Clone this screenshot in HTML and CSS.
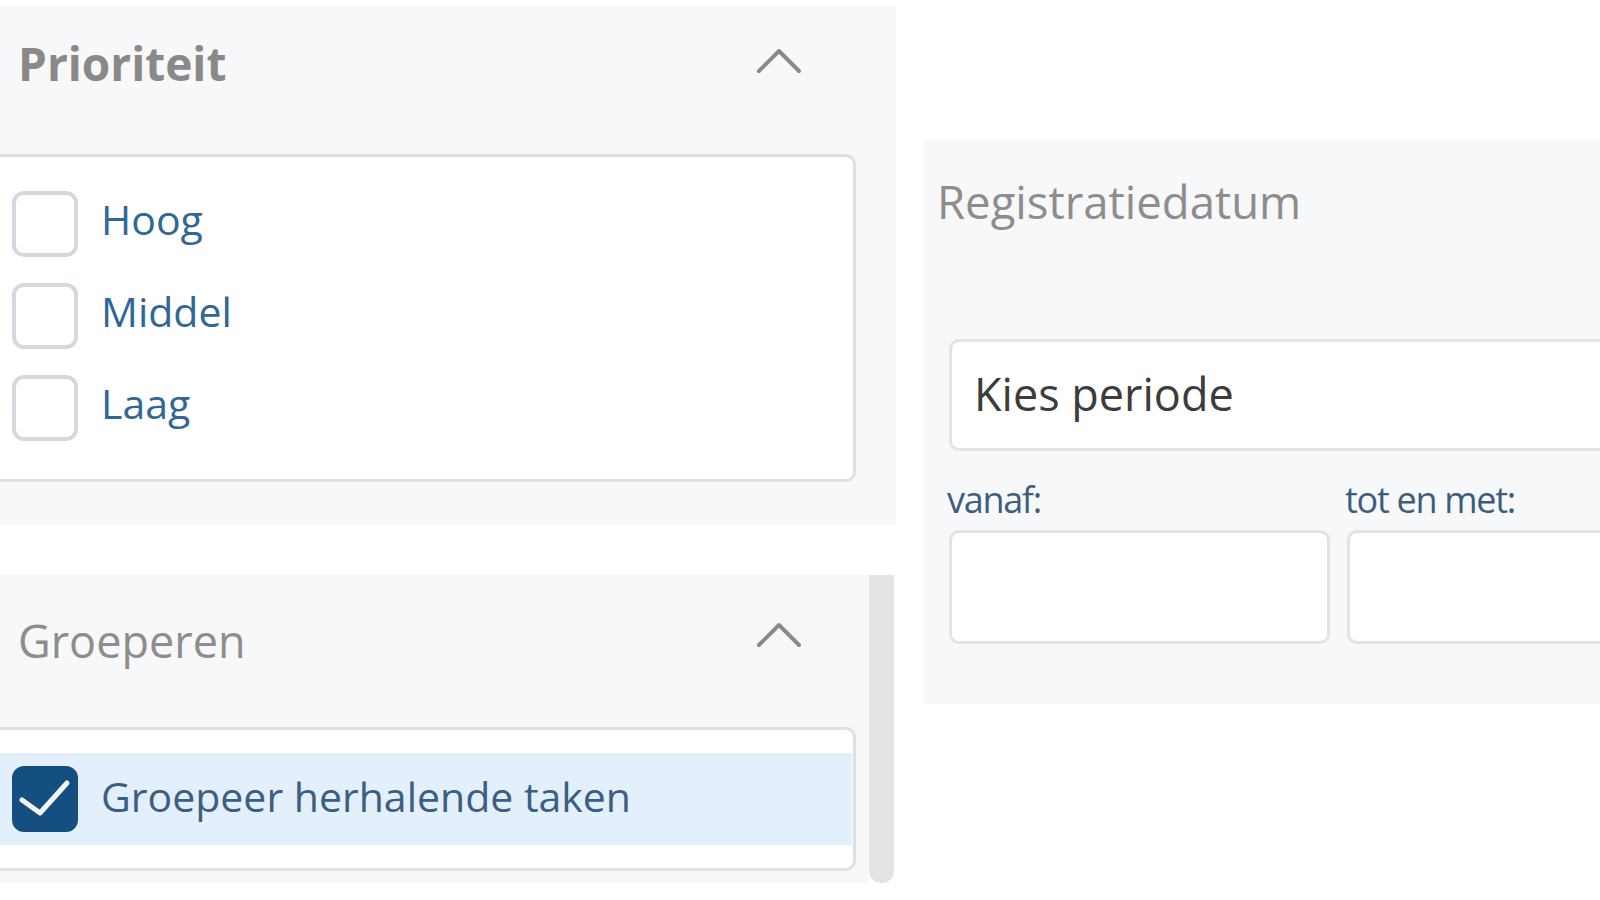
FILE: index.html
```html
<!DOCTYPE html>
<html lang="nl">
<head>
<meta charset="utf-8">
<title>Filters</title>
<link rel="stylesheet" href="styles.css">
</head>
<body>
<div class="page">
  <div class="left-col">
    <section class="panel panel-prio">
      <div class="panel-head">
        <h2 class="panel-title bold">Prioriteit</h2>
        <svg class="chevron" width="46" height="28" viewBox="0 0 46 28"><polyline points="3,24 23,4 43,24" fill="none" stroke="#8a8a8a" stroke-width="4" stroke-linecap="round" stroke-linejoin="round"/></svg>
      </div>
      <div class="card card-prio">
        <label class="row"><span class="box"></span><span class="row-label">Hoog</span></label>
        <label class="row"><span class="box"></span><span class="row-label">Middel</span></label>
        <label class="row"><span class="box"></span><span class="row-label">Laag</span></label>
      </div>
    </section>
    <section class="panel panel-group">
      <div class="group-main">
        <div class="panel-head head-group">
          <h2 class="panel-title">Groeperen</h2>
          <svg class="chevron" width="46" height="28" viewBox="0 0 46 28"><polyline points="3,24 23,4 43,24" fill="none" stroke="#8a8a8a" stroke-width="4" stroke-linecap="round" stroke-linejoin="round"/></svg>
        </div>
        <div class="card card-group">
          <label class="row row-active"><span class="box box-checked"><svg class="check" width="58" height="58" viewBox="0 0 58 58"><polyline points="6,30 24,43 51,13" fill="none" stroke="#f4f8fc" stroke-width="5" stroke-linecap="round" stroke-linejoin="round"/></svg></span><span class="row-label dark">Groepeer herhalende taken</span></label>
        </div>
      </div>
      <div class="scrollbar"></div>
    </section>
  </div>
  <section class="panel panel-date">
    <h2 class="panel-title date-title">Registratiedatum</h2>
    <div class="select-box"><span class="select-text">Kies periode</span></div>
    <div class="range">
      <div class="range-field">
        <span class="range-label">vanaf:</span>
        <div class="input-box"></div>
      </div>
      <div class="range-field">
        <span class="range-label">tot en met:</span>
        <div class="input-box wide"></div>
      </div>
    </div>
  </section>
</div>
</body>
</html>
```

FILE: styles.css
```css
html, body {
  margin: 0;
  padding: 0;
  background: #ffffff;
  overflow: hidden;
  width: 1600px;
  height: 900px;
}

body {
  font-family: "Open Sans", "Noto Sans", sans-serif;
}

.page {
  display: flex;
  align-items: flex-start;
  width: 1600px;
  height: 900px;
  overflow: hidden;
}

.left-col {
  width: 896px;
  flex: none;
  padding-top: 6px;
  display: flex;
  flex-direction: column;
  gap: 50px;
}

.panel {
  background: #f7f8fa;
}

.panel-prio {
  height: 519px;
  display: flex;
  flex-direction: column;
}

.panel-head {
  height: 148px;
  display: flex;
  justify-content: space-between;
  align-items: flex-start;
  padding: 0 94px 0 18px;
  box-sizing: border-box;
}

.panel-title {
  margin: 0;
  font-size: 45px;
  font-weight: 400;
  line-height: 60px;
  color: #8d8d8d;
  padding-top: 28px;
  letter-spacing: 0;
}

.panel-title.bold {
  font-weight: 700;
  font-size: 46px;
  color: #898989;
  letter-spacing: 0;
  padding-top: 27px;
}

.chevron {
  margin-top: 41px;
}

.card {
  background: #ffffff;
  border: 3px solid #dde1e6;
  border-radius: 10px;
  margin-left: -10px;
  width: 866px;
  box-sizing: border-box;
}

.card-prio {
  height: 328px;
  padding-top: 34px;
}

.row {
  display: flex;
  align-items: center;
  gap: 23px;
  height: 66px;
  margin-bottom: 26px;
  padding-left: 19px;
}

.box {
  width: 66px;
  height: 66px;
  box-sizing: border-box;
  border: 4px solid #d4d9df;
  border-radius: 12px;
  background: #ffffff;
  flex: none;
  display: flex;
  align-items: center;
  justify-content: center;
}

.row-label {
  font-size: 41px;
  color: #2f6896;
  line-height: 1;
  margin-top: -10px;
}

.row-label.dark {
  color: #3b5f82;
  margin-top: -6px;
}

.panel-group {
  display: flex;
  height: 308px;
  width: 894px;
  background: transparent;
}

.group-main {
  width: 869px;
  background: #f7f8fa;
  display: flex;
  flex-direction: column;
}

.head-group {
  height: 152px;
  padding-right: 67px;
}

.head-group .panel-title {
  padding-top: 36px;
}

.head-group .chevron {
  margin-top: 46px;
}

.card-group {
  height: 144px;
  padding-top: 23px;
}

.row-active {
  background: #e3f0fb;
  height: 92px;
  margin-bottom: 0;
  margin-right: 1px;
}

.box-checked {
  background: #154f80;
  border-color: #154f80;
}

.check {
  flex: none;
}

.scrollbar {
  width: 25px;
  background: #e3e4e5;
  border-radius: 0 0 12px 12px;
}

.panel-date {
  margin-left: 28px;
  margin-top: 140px;
  width: 900px;
  flex: none;
  height: 564px;
  padding-left: 13px;
  box-sizing: border-box;
}

.date-title {
  padding-top: 31px;
  height: 199px;
  box-sizing: border-box;
  font-size: 45.5px;
}

.select-box {
  margin-left: 12px;
  height: 112px;
  background: #ffffff;
  border: 3px solid #e0e3e7;
  border-radius: 10px;
  box-sizing: border-box;
  display: flex;
  align-items: center;
  padding-left: 22px;
}

.select-text {
  font-size: 45px;
  color: #3c3c3c;
  margin-top: -4px;
}

.range {
  display: flex;
  gap: 15px;
  margin-left: 10px;
  margin-top: 26px;
}

.range-field {
  display: flex;
  flex-direction: column;
  gap: 7px;
}

.range-label {
  font-size: 36px;
  line-height: 46px;
  color: #3e5d7c;
  letter-spacing: -1.3px;
}

.input-box {
  margin-left: 2px;
  width: 381px;
  height: 114px;
  background: #ffffff;
  border: 3px solid #e0e3e7;
  border-radius: 10px;
  box-sizing: border-box;
}

.input-box.wide {
  width: 500px;
}
```
